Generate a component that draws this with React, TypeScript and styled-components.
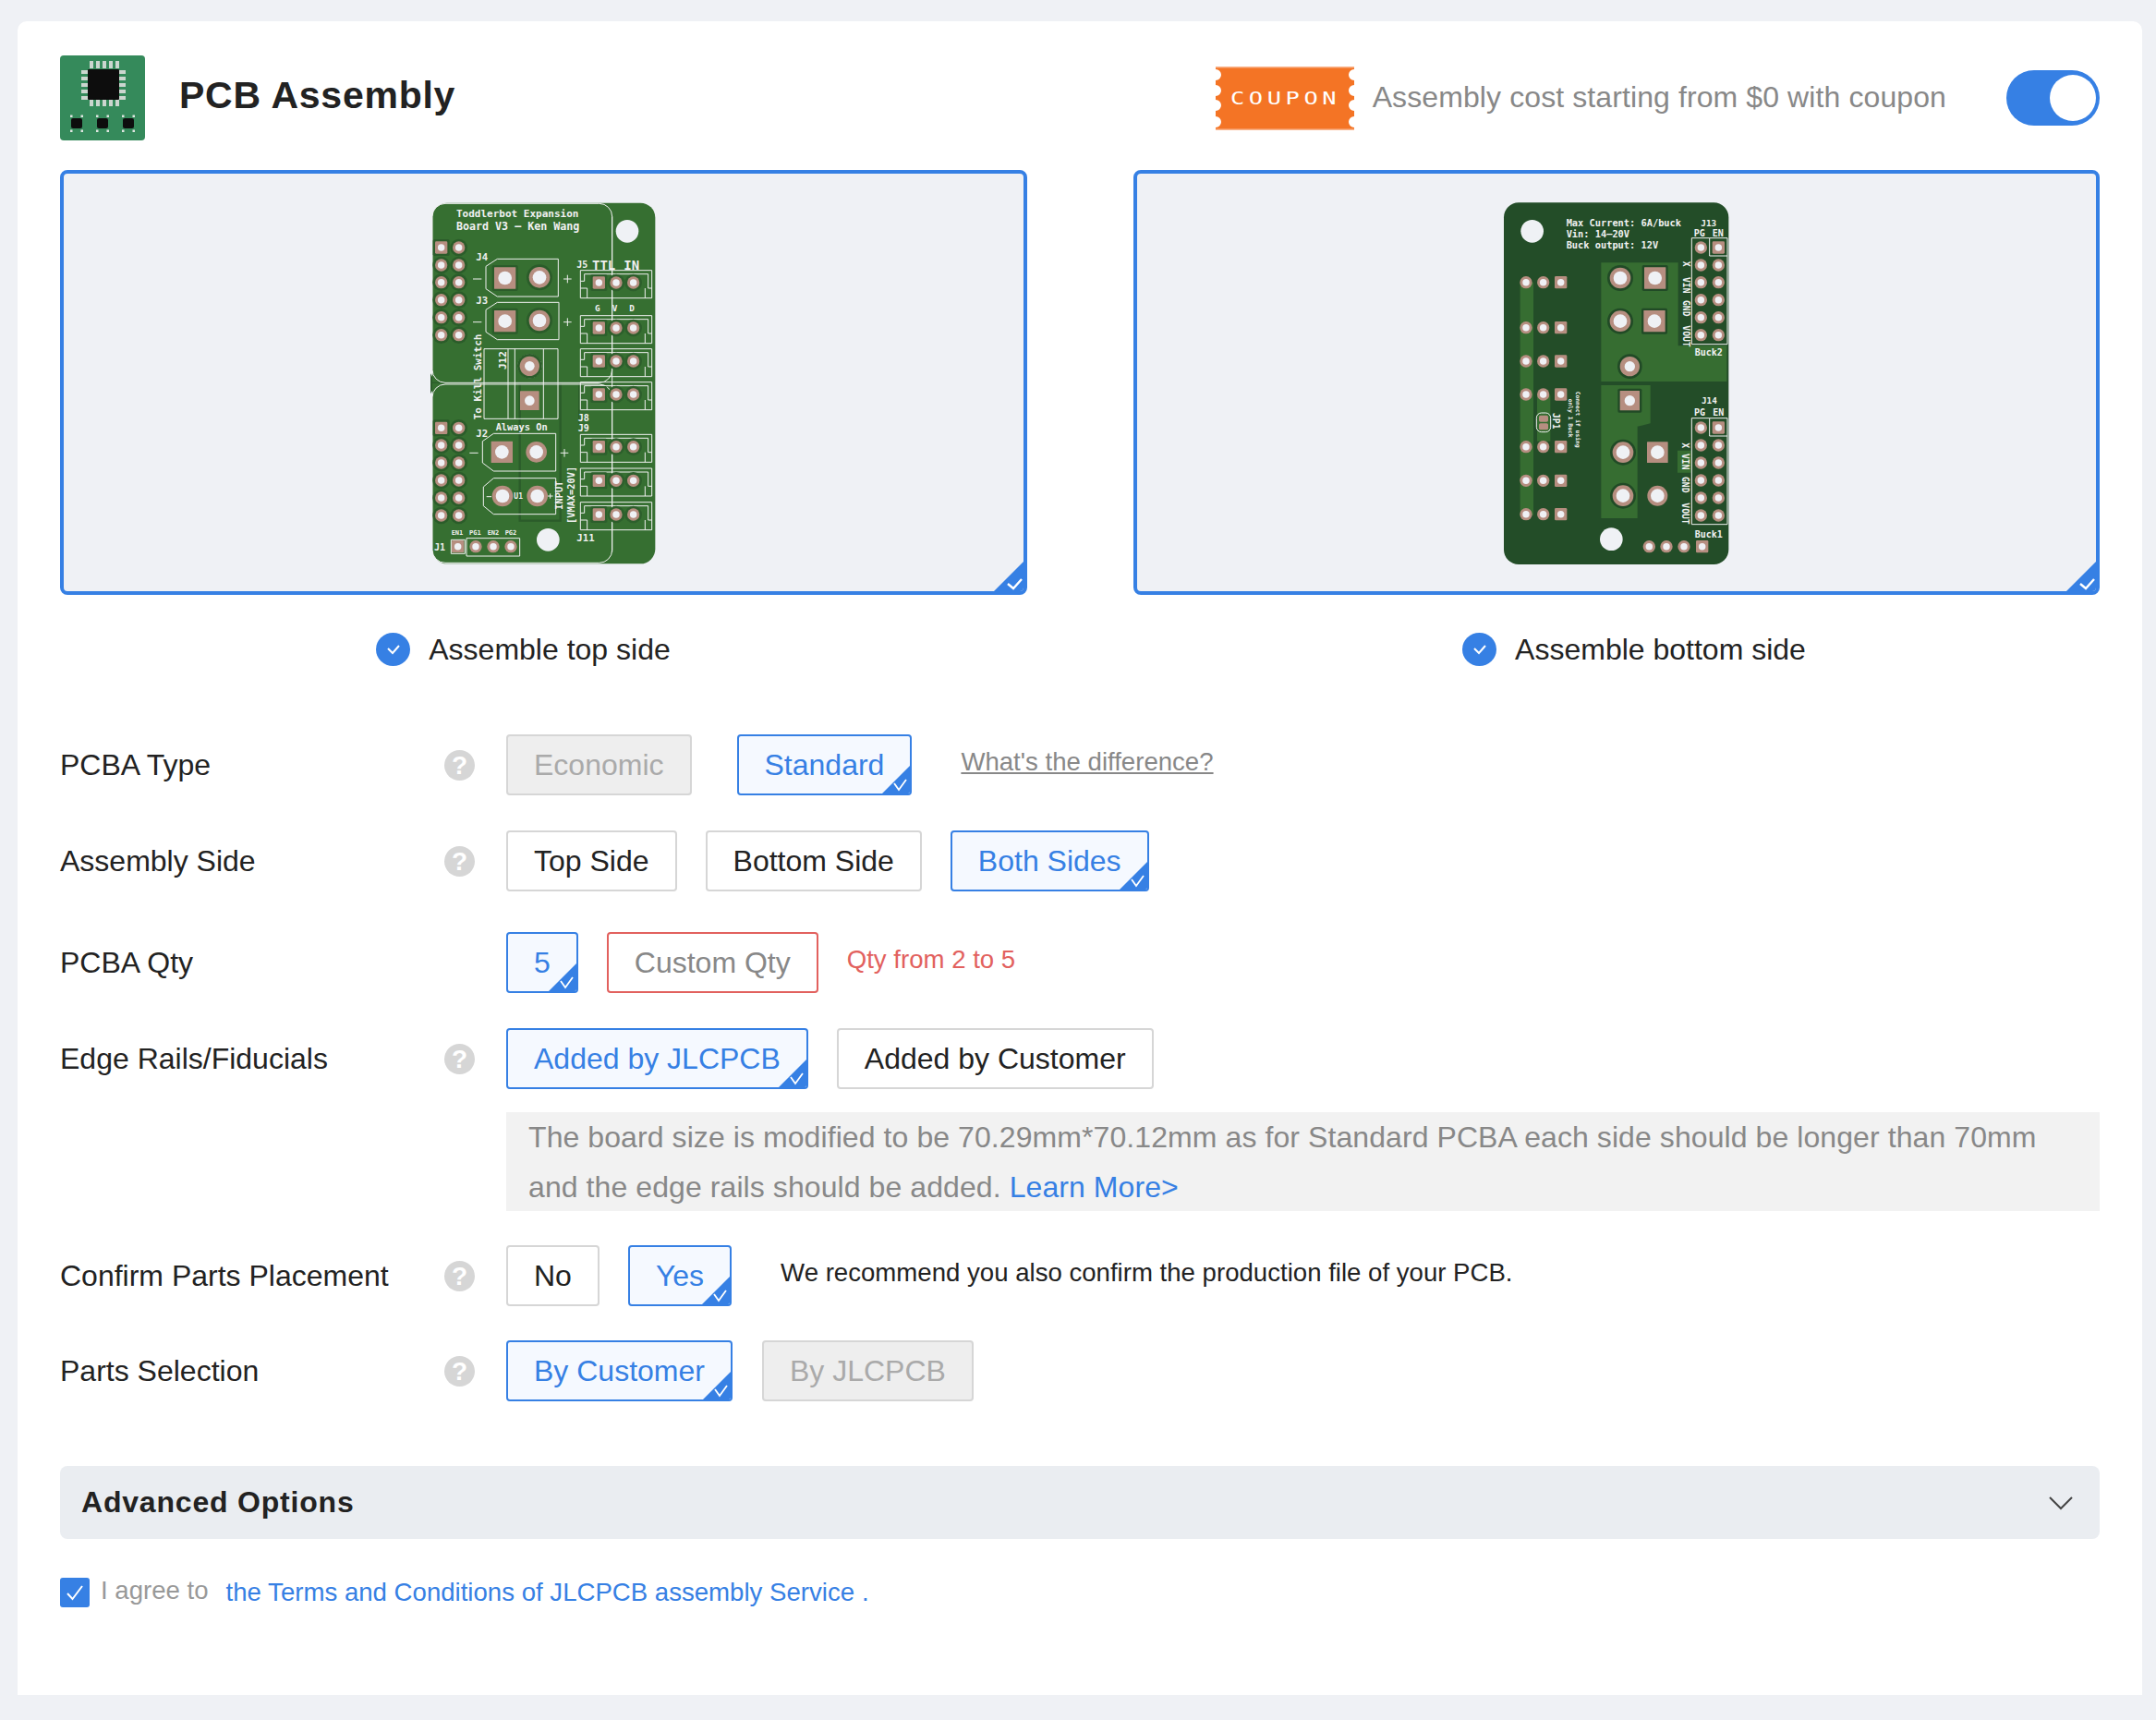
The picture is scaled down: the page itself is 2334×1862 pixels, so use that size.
import React from "react";
import styled, { createGlobalStyle } from "styled-components";

const BLUE = "#3680e4";

const Global = createGlobalStyle`
  html, body { margin: 0; padding: 0; background: #eff1f5; }
  body { font-family: "Liberation Sans", Arial, sans-serif; color: #222; }
  * { box-sizing: border-box; }
`;

const Page = styled.div`
  width: 2334px;
  height: 1862px;
  padding: 23px 15px 27px 19px;
`;
const Card = styled.main`
  height: 1812px;
  background: #fff;
  border-radius: 10px 10px 0 0;
  padding: 37px 46px 0;
`;
const Header = styled.header`
  display: flex;
  align-items: center;
  height: 92px;
`;
const Title = styled.h1`
  margin: 0 0 6px 37px;
  font-size: 41px;
  font-weight: 700;
  letter-spacing: 0.75px;
  color: #222;
  flex: 1;
`;
const CouponText = styled.span`
  margin: 0 0 2px 20px;
  font-size: 32px;
  color: #888;
  letter-spacing: 0.1px;
`;
const Toggle = styled.div`
  width: 101px;
  height: 60px;
  border-radius: 30px;
  background: ${BLUE};
  margin-left: 65px;
  padding: 5px 4px;
  display: flex;
  justify-content: flex-end;
`;
const Knob = styled.div`
  width: 50px;
  height: 50px;
  border-radius: 50%;
  background: #fff;
`;
const Boards = styled.section`
  display: grid;
  grid-template-columns: 1047px 1046px;
  column-gap: 115px;
  margin-top: 32px;
`;
const Panel = styled.div`
  position: relative;
  height: 460px;
  border: 4px solid ${BLUE};
  border-radius: 8px;
  background: #eff1f5;
  display: flex;
  align-items: center;
  justify-content: center;
  overflow: hidden;
`;
const BoardSvg = styled.svg<{ $left: number }>`
  width: 300px;
  height: 430px;
  flex: none;
  margin: 3px 0 0 ${(p) => p.$left}px;
`;
const Corner = styled.svg`
  position: absolute;
  right: 0;
  bottom: 0;
`;
const Caption = styled.div<{ $shift: number }>`
  display: flex;
  align-items: center;
  justify-content: center;
  gap: 20px;
  margin-top: 41px;
  height: 36px;
  transform: translateX(${(p) => p.$shift}px);
  font-size: 32px;
  color: #222;
`;
const CheckCircle = styled.span`
  width: 37px;
  height: 36px;
  border-radius: 50%;
  background: ${BLUE};
  display: flex;
  align-items: center;
  justify-content: center;
`;
const Rows = styled.div`
  margin-top: 74px;
`;
const Row = styled.div<{ $top?: number }>`
  display: flex;
  align-items: center;
  height: 66px;
  margin-top: ${(p) => p.$top ?? 0}px;
`;
const Label = styled.div`
  flex: 0 0 416px;
  font-size: 32px;
  color: #222;
`;
const Help = styled.span<{ $empty?: boolean }>`
  flex: 0 0 33px;
  height: 33px;
  margin-right: 34px;
  border-radius: 50%;
  background: ${(p) => (p.$empty ? "transparent" : "#d6d6d6")};
  color: #fff;
  font-size: 28px;
  font-weight: 700;
  line-height: 33px;
  text-align: center;
`;
const Btn = styled.div<{ $on?: boolean; $off?: boolean; $err?: boolean; $gap?: number }>`
  position: relative;
  height: 66px;
  padding: 0 28px;
  margin-right: ${(p) => p.$gap ?? 31}px;
  display: flex;
  align-items: center;
  font-size: 32px;
  border-radius: 4px;
  overflow: hidden;
  white-space: nowrap;
  border: 2px solid ${(p) => (p.$on ? BLUE : p.$err ? "#e2615e" : "#d6d6d6")};
  background: ${(p) => (p.$on ? "#f5f9ff" : p.$off ? "#eeeeee" : "#fff")};
  color: ${(p) => (p.$on ? BLUE : p.$off ? "#aaa" : p.$err ? "#888" : "#222")};
`;
const Mark = styled.svg`
  position: absolute;
  right: -2px;
  bottom: -2px;
`;
const DiffLink = styled.a`
  font-size: 27.6px;
  color: #888;
  text-decoration: underline;
  margin: 0 0 6px 22px;
`;
const QtyNote = styled.span`
  font-size: 27.6px;
  color: #e2615e;
  margin-bottom: 6px;
`;
const Note = styled.div`
  margin: 25px 0 0 483px;
  height: 107px;
  padding-left: 24px;
  background: #f2f2f2;
  color: #888;
  font-size: 32px;
  line-height: 54px;
  letter-spacing: 0.08px;
`;
const BlueLink = styled.a`
  color: ${BLUE};
`;
const Recommend = styled.span`
  font-size: 27.6px;
  color: #222;
  margin: 0 0 6px 5px;
`;
const Advanced = styled.div`
  margin-top: 70px;
  height: 79px;
  border-radius: 8px;
  background: #eaedf1;
  padding: 0 27px 0 23px;
  display: flex;
  align-items: center;
  justify-content: space-between;
  font-size: 32px;
  font-weight: 700;
  letter-spacing: 0.8px;
  color: #222;
`;
const Agree = styled.div`
  margin-top: 40px;
  display: flex;
  align-items: center;
  font-size: 27.6px;
`;
const Checkbox = styled.span`
  width: 32px;
  height: 32px;
  border-radius: 3px;
  background: ${BLUE};
  display: flex;
  align-items: center;
  justify-content: center;
  margin-right: 12px;
`;
const AgreeText = styled.span`
  color: #999;
  margin: 0 19px 4px 0;
`;
const AgreeLink = styled.a`
  color: ${BLUE};
`;
const Dot = styled.span`
  color: ${BLUE};
  margin-left: 8px;
`;
const Silk = styled.text<{ $size?: number }>`
  font-family: "DejaVu Sans Mono", "Liberation Mono", monospace;
  font-size: ${(p) => p.$size ?? 30}px;
  font-weight: 700;
  fill: #f1f1f1;
`;
const CouponLabel = styled.text`
  font-family: "DejaVu Sans Mono", monospace;
  font-size: 20px;
  fill: #fff;
  letter-spacing: 3.6px;
`;

const PAD = "#b68e80";
const HOLE = "#eff1f5";

type PadProps = { x: number; y: number; r?: number; h?: number; sq?: boolean; halo?: string };
const Pad = ({ x, y, r = 20, h, sq, halo }: PadProps) => {
  const hole = h ?? r * 0.56;
  return (
    <g>
      {halo && (sq ? (
        <rect x={x - r - 7} y={y - r - 7} width={2 * r + 14} height={2 * r + 14} rx={5} fill={halo} />
      ) : (
        <circle cx={x} cy={y} r={r + 8} fill={halo} />
      ))}
      {sq ? (
        <rect x={x - r} y={y - r} width={2 * r} height={2 * r} rx={r > 25 ? 1 : 4} fill={PAD} />
      ) : (
        <circle cx={x} cy={y} r={r} fill={PAD} />
      )}
      <circle cx={x} cy={y} r={hole} fill={HOLE} />
    </g>
  );
};

const SL = { fill: "none", stroke: "#f1f1f1", strokeWidth: 3 };

const Conn = ({ y }: { y: number }) => (
  <g>
    <path d={`M565 ${y - 40}H797V${y + 50}H565Z M565 ${y - 5}H578V${y - 28}H785V${y + 18}H797 M565 ${y + 18}H587V${y + 50} M775 ${y + 50}V${y + 18}`} {...SL} />
    <Pad x={625} y={y} sq halo="#2d5f2c" />
    <Pad x={681} y={y} halo="#2d5f2c" />
    <Pad x={737} y={y} halo="#2d5f2c" />
  </g>
);

const TopBoard = () => {
  const dark = "#2b5c2a";
  return (
    <BoardSvg $left={3} viewBox="0 0 900 1290">
      <rect x={84} y={56} width={724} height={1172} rx={48} fill="#366f31" />
      <path d="M78 610L84 620V665L78 676Z" fill="#2b5c2a" />
      <rect x={368} y={642} width={132} height={446} fill="none" stroke={dark} strokeWidth={7} />
      <path d="M560 640V772M84 640H668" stroke={dark} strokeWidth={4} fill="none" />
      <rect x={84} y={58} width={584} height={582} rx={42} {...SL} />
      <rect x={84} y={645} width={584} height={580} rx={42} {...SL} />
      <path d="M668 100V1190" {...SL} />

      {[201, 258, 314, 371, 428, 485, 787, 843, 900, 957, 1014, 1071].map((y, i) => (
        <g key={y}>
          <Pad x={113} y={y} sq={i === 0 || i === 6} halo={dark} />
          <Pad x={170} y={y} halo={dark} />
        </g>
      ))}

      <Silk x={162} y={103} $size={33}>Toddlerbot Expansion</Silk>
      <Silk x={162} y={144} $size={35}>Board V3 — Ken Wang</Silk>

      <path d="M295 238H493V360H295L258 335V262Z" {...SL} />
      <Pad x={320} y={300} r={35} h={22} sq halo={dark} />
      <Pad x={432} y={298} r={34} h={22} halo={dark} />
      <path d="M295 379H495V500H295L258 475V403Z" {...SL} />
      <Pad x={320} y={440} r={35} h={22} sq halo={dark} />
      <Pad x={432} y={438} r={34} h={22} halo={dark} />
      <Silk x={226} y={244} $size={32}>J4</Silk>
      <Silk x={226} y={385} $size={32}>J3</Silk>
      <path d="M216 303H244M510 303H536M523 290V316M216 443H244M510 443H536M523 430V456M205 868H233M500 868H526M513 855V881M260 1010H276M459 1008H476M467 1000V1016" {...SL} />

      <path d="M252 530H492V757H252ZM330 530V757M352 530V757M445 530V757" {...SL} />
      <circle cx={400} cy={586} r={38} {...SL} />
      <Pad x={400} y={586} r={32} h={16} halo={dark} />
      <Pad x={400} y={698} r={31} h={16} sq />
      <Silk transform="translate(244 760) rotate(-90)" $size={33}>To Kill Switch</Silk>
      <Silk transform="translate(324 597) rotate(-90)" $size={33}>J12</Silk>

      <Silk x={290} y={795} $size={31}>Always On</Silk>
      <Silk x={226} y={817} $size={32}>J2</Silk>
      <path d="M283 805H485V927H283L247 900V830Z" {...SL} />
      <Pad x={310} y={865} r={35} h={22} sq />
      <Pad x={422} y={865} r={34} h={22} />
      <path d="M283 950H485V1067H283L250 1040V978Z" {...SL} />
      <Pad x={312} y={1008} r={34} h={22} />
      <Pad x={425} y={1008} r={34} h={22} />
      <Silk x={349} y={1018} $size={24}>U1</Silk>
      <Silk transform="translate(508 1052) rotate(-90)" $size={31}>INPUT</Silk>
      <Silk transform="translate(545 1098) rotate(-90)" $size={31}>[VMAX=20V]</Silk>

      {[315, 462, 570, 678, 848, 958, 1068].map((y) => <Conn key={y} y={y} />)}
      <Silk x={553} y={266} $size={30}>J5</Silk>
      <Silk x={603} y={273} $size={42}>TTL</Silk>
      <Silk x={706} y={273} $size={42}>IN</Silk>
      <Silk x={612} y={408} $size={28}>G</Silk>
      <Silk x={668} y={408} $size={28}>V</Silk>
      <Silk x={724} y={408} $size={28}>D</Silk>
      <Silk x={557} y={766} $size={30}>J8</Silk>
      <Silk x={557} y={798} $size={30}>J9</Silk>
      <Silk x={553} y={1156} $size={32}>J11</Silk>

      <Silk x={90} y={1185} $size={30}>J1</Silk>
      <Silk x={146} y={1135} $size={21}>EN1</Silk>
      <Silk x={204} y={1135} $size={21}>PG1</Silk>
      <Silk x={263} y={1135} $size={21}>EN2</Silk>
      <Silk x={320} y={1135} $size={21}>PG2</Silk>
      <path d="M145 1150H190V1195H145ZM195 1145H368V1203H195Z" {...SL} />
      <Pad x={167} y={1172} sq />
      <Pad x={225} y={1172} />
      <Pad x={282} y={1172} />
      <Pad x={339} y={1172} />
      <circle cx={717} cy={148} r={37} fill={HOLE} />
      <circle cx={460} cy={1150} r={37} fill={HOLE} />
    </BoardSvg>
  );
};

const BottomBoard = () => {
  const light = "#366d31";
  const halo = "#214a26";
  return (
    <BoardSvg $left={0} viewBox="0 0 900 1290">
      <rect x={84} y={55} width={730} height={1175} rx={48} fill="#234d28" />
      <path d="M400 250H650V520H808V636H400ZM400 648H560V772L518 782V1080H400ZM137 314H180V1070H137ZM192 680H235V830H192ZM648 860H692V932H648Z" fill={light} />

      <Silk x={287} y={131} $size={31}>Max Current: 6A/buck</Silk>
      <Silk x={287} y={167} $size={31}>Vin: 14—20V</Silk>
      <Silk x={287} y={204} $size={31}>Buck output: 12V</Silk>
      <Silk x={724} y={133} $size={28}>J13</Silk>
      <Silk x={701} y={164} $size={30}>PG</Silk>
      <Silk x={761} y={164} $size={30}>EN</Silk>
      <Silk x={704} y={552} $size={30}>Buck2</Silk>
      <Silk x={726} y={709} $size={28}>J14</Silk>
      <Silk x={702} y={747} $size={30}>PG</Silk>
      <Silk x={763} y={747} $size={30}>EN</Silk>
      <Silk x={704} y={1142} $size={30}>Buck1</Silk>

      <Silk transform="translate(665 245) rotate(90)" $size={29}>X</Silk>
      <Silk transform="translate(665 297) rotate(90)" $size={29}>VIN</Silk>
      <Silk transform="translate(665 372) rotate(90)" $size={29}>GND</Silk>
      <Silk transform="translate(665 454) rotate(90)" $size={29}>VOUT</Silk>
      <Silk transform="translate(662 835) rotate(90)" $size={29}>X</Silk>
      <Silk transform="translate(662 870) rotate(90)" $size={29}>VIN</Silk>
      <Silk transform="translate(662 945) rotate(90)" $size={29}>GND</Silk>
      <Silk transform="translate(662 1030) rotate(90)" $size={29}>VOUT</Silk>

      <path d="M694 170H752V228H810V515H694ZM752 170H810V228" {...SL} />
      <path d="M694 755H752V813H810V1100H694ZM752 755H810V813" {...SL} />
      {[201, 258, 314, 371, 428, 485, 786, 843, 900, 957, 1014, 1071].map((y, i) => (
        <g key={y}>
          <Pad x={724} y={y} />
          <Pad x={781} y={y} sq={i === 0 || i === 6} />
        </g>
      ))}

      {[314, 461, 570, 678, 848, 958, 1067].map((y) => (
        <g key={y}>
          <Pad x={156} y={y} />
          <Pad x={212} y={y} />
          <Pad x={269} y={y} sq />
        </g>
      ))}

      <Pad x={462} y={300} r={34} h={22} halo={halo} />
      <Pad x={575} y={300} r={35} h={22} sq halo={halo} />
      <Pad x={462} y={440} r={34} h={22} halo={halo} />
      <Pad x={573} y={440} r={35} h={22} sq halo={halo} />
      <Pad x={493} y={587} r={32} h={17} halo={halo} />
      <Pad x={493} y={698} r={32} h={17} sq halo={halo} />
      <Pad x={471} y={866} r={34} h={22} halo={halo} />
      <Pad x={583} y={866} r={34} h={22} sq />
      <Pad x={471} y={1007} r={34} h={22} halo={halo} />
      <Pad x={583} y={1007} r={33} h={22} />

      <rect x={190} y={738} width={46} height={62} rx={16} {...SL} />
      <rect x={198} y={746} width={30} height={21} rx={5} fill={PAD} />
      <rect x={198} y={772} width={30} height={21} rx={5} fill={PAD} />
      <Silk transform="translate(242 738) rotate(90)" $size={29}>JP1</Silk>
      <Silk transform="translate(318 668) rotate(90)" $size={19}>Connect if using</Silk>
      <Silk transform="translate(293 692) rotate(90)" $size={19}>only 1 Buck</Silk>

      <Pad x={556} y={1172} />
      <Pad x={612} y={1172} />
      <Pad x={669} y={1172} />
      <Pad x={728} y={1172} sq />
      <circle cx={176} cy={148} r={37} fill={HOLE} />
      <circle cx={433} cy={1148} r={37} fill={HOLE} />
    </BoardSvg>
  );
};

const CornerTick = () => (
  <Corner width="32" height="32" viewBox="0 0 32 32">
    <path d="M32 0V32H0Z" fill={BLUE} />
    <path d="M15 24L21 29L30 19" fill="none" stroke="#fff" strokeWidth="2.4" />
  </Corner>
);

const ButtonMark = () => (
  <Mark width="34" height="34" viewBox="0 0 34 34">
    <path d="M34 0V34H0Z" fill={BLUE} />
    <path d="M15 21L20 28L28 17" fill="none" stroke="#fff" strokeWidth="1.8" />
  </Mark>
);

const Logo = () => {
  const pins = [0, 1, 2, 3, 4];
  return (
    <svg width="92" height="92" viewBox="0 0 92 92">
      <defs>
        <filter id="logo-soft" x="-5%" y="-5%" width="110%" height="110%">
          <feGaussianBlur stdDeviation="0.6" />
        </filter>
      </defs>
      <rect width="92" height="92" rx="4" fill="#358a5b" />
      <g filter="url(#logo-soft)">
        {pins.map((i) => (
          <g key={i} fill="#cbd6cf">
            <rect x={32 + i * 7} y={6} width={4} height={8} />
            <rect x={32 + i * 7} y={47} width={4} height={8} />
            <rect x={23} y={16 + i * 7} width={8} height={4} />
            <rect x={63} y={16 + i * 7} width={8} height={4} />
          </g>
        ))}
        <rect x="30" y="15" width="34" height="33" rx="1" fill="#0e0e0e" />
        {[12, 40, 68].map((x) => (
          <g key={x}>
            <rect x={x} y={68} width={12} height={11} rx={2} fill="#0e0e0e" />
            <rect x={x - 1} y={64.5} width={2.5} height={2.5} fill="#dfe6e1" />
            <rect x={x + 10.5} y={64.5} width={2.5} height={2.5} fill="#dfe6e1" />
            <rect x={x - 1} y={80.5} width={2.5} height={2.5} fill="#dfe6e1" />
            <rect x={x + 10.5} y={80.5} width={2.5} height={2.5} fill="#dfe6e1" />
          </g>
        ))}
      </g>
    </svg>
  );
};

const Coupon = () => {
  const ys = [9, 26, 42, 60];
  const right = ys.map((y) => `L150 ${y - 6}A6 6 0 0 0 150 ${y + 6}`).join("");
  const left = [...ys].reverse().map((y) => `L0 ${y + 6}A6 6 0 0 0 0 ${y - 6}`).join("");
  return (
    <svg width="150" height="69" viewBox="0 0 150 69">
      <path d={`M0 1H150${right}L150 68H0${left}Z`} fill="#f47425" />
      <rect width="150" height="1.5" fill="#f9b48c" />
      <rect y="67.5" width="150" height="1.5" fill="#f9b48c" />
      <CouponLabel transform="translate(16 41) scale(1.27 1)">COUPON</CouponLabel>
    </svg>
  );
};

const CircleTick = () => (
  <CheckCircle>
    <svg width="18" height="14" viewBox="0 0 18 14"><path d="M3 6L8 11L15 3" fill="none" stroke="#fff" strokeWidth="2" /></svg>
  </CheckCircle>
);

export default function App() {
  return (
    <Page>
      <Global />
      <Card>
        <Header>
          <Logo />
          <Title>PCB Assembly</Title>
          <Coupon />
          <CouponText>Assembly cost starting from $0 with coupon</CouponText>
          <Toggle><Knob /></Toggle>
        </Header>

        <Boards>
          <div>
            <Panel><TopBoard /><CornerTick /></Panel>
            <Caption $shift={-22}>
              <CircleTick />
              Assemble top side
            </Caption>
          </div>
          <div>
            <Panel><BottomBoard /><CornerTick /></Panel>
            <Caption $shift={19}>
              <CircleTick />
              Assemble bottom side
            </Caption>
          </div>
        </Boards>

        <Rows>
          <Row>
            <Label>PCBA Type</Label>
            <Help>?</Help>
            <Btn $off $gap={49}>Economic</Btn>
            <Btn $on>Standard<ButtonMark /></Btn>
            <DiffLink>What's the difference?</DiffLink>
          </Row>
          <Row $top={38}>
            <Label>Assembly Side</Label>
            <Help>?</Help>
            <Btn>Top Side</Btn>
            <Btn>Bottom Side</Btn>
            <Btn $on>Both Sides<ButtonMark /></Btn>
          </Row>
          <Row $top={44}>
            <Label>PCBA Qty</Label>
            <Help $empty />
            <Btn $on>5<ButtonMark /></Btn>
            <Btn $err>Custom Qty</Btn>
            <QtyNote>Qty from 2 to 5</QtyNote>
          </Row>
          <Row $top={38}>
            <Label>Edge Rails/Fiducials</Label>
            <Help>?</Help>
            <Btn $on>Added by JLCPCB<ButtonMark /></Btn>
            <Btn>Added by Customer</Btn>
          </Row>
          <Note>
            The board size is modified to be 70.29mm*70.12mm as for Standard PCBA each side should be longer than 70mm
            <br />
            and the edge rails should be added. <BlueLink>Learn More&gt;</BlueLink>
          </Note>
          <Row $top={37}>
            <Label>Confirm Parts Placement</Label>
            <Help>?</Help>
            <Btn>No</Btn>
            <Btn $on $gap={48}>Yes<ButtonMark /></Btn>
            <Recommend>We recommend you also confirm the production file of your PCB.</Recommend>
          </Row>
          <Row $top={37}>
            <Label>Parts Selection</Label>
            <Help>?</Help>
            <Btn $on $gap={32}>By Customer<ButtonMark /></Btn>
            <Btn $off>By JLCPCB</Btn>
          </Row>
        </Rows>

        <Advanced>
          Advanced Options
          <svg width="30" height="18" viewBox="0 0 30 18"><path d="M3 3L15 15L27 3" fill="none" stroke="#444" strokeWidth="2" /></svg>
        </Advanced>

        <Agree>
          <Checkbox>
            <svg width="22" height="22" viewBox="0 0 22 22"><path d="M3 12L8.5 18L19 4" fill="none" stroke="#fff" strokeWidth="2" /></svg>
          </Checkbox>
          <AgreeText>I agree to</AgreeText>
          <AgreeLink>the Terms and Conditions of JLCPCB assembly Service</AgreeLink>
          <Dot>.</Dot>
        </Agree>
      </Card>
    </Page>
  );
}
